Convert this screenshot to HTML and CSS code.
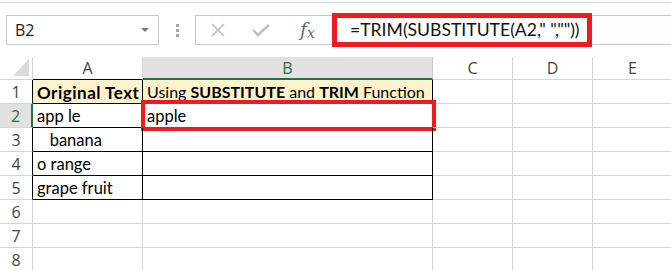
FILE: index.html
```html
<!DOCTYPE html>
<html lang="en">
<head>
  <meta charset="UTF-8">
  <title>TRIM SUBSTITUTE</title>
  <link rel="stylesheet" href="styles.css">
</head>
<body>
  <div class="topline"></div>

  <!-- formula bar -->
  <div class="toolbar">
    <div class="namebox">
      <span>B2</span>
      <svg class="caret" width="8" height="5" viewBox="0 0 8 5"><path d="M0 0H8L4 4Z" fill="#7a7a7a"/></svg>
    </div>
    <div class="dots"><i></i><i></i><i></i></div>
    <div class="fbtns">
      <svg width="16" height="16" viewBox="0 0 16 16"><path d="M2 2L14 14M14 2L2 14" stroke="#bdbdbd" stroke-width="1.6"/></svg>
      <svg width="18" height="14" viewBox="0 0 18 14"><path d="M1 7L6 12L17 2" stroke="#bdbdbd" stroke-width="2.4" fill="none"/></svg>
      <span class="fx">f<sub>x</sub></span>
    </div>
    <div class="fbar">
      <div class="formula">=TRIM(SUBSTITUTE(A2," ",""))</div>
    </div>
  </div>

  <!-- sheet -->
  <div class="sheet">
    <div class="hd corner"><svg width="16" height="17" viewBox="0 0 16 17"><path d="M16 0V17H0Z" fill="#dadada"/></svg></div>
    <div class="hd colA">A</div>
    <div class="hd colB sel">B</div>
    <div class="hd">C</div>
    <div class="hd">D</div>
    <div class="hd">E</div>

    <div class="rh edge">1</div>
    <div class="c b head bold">Original Text</div>
    <div class="c b head">Using <b>SUBSTITUTE</b> and <b>TRIM</b> Function</div>
    <div class="c"></div><div class="c"></div><div class="c"></div>

    <div class="rh edge rsel">2</div>
    <div class="c b">app le</div>
    <div class="c b">apple<span class="mark"></span></div>
    <div class="c"></div><div class="c"></div><div class="c"></div>

    <div class="rh edge">3</div>
    <div class="c b">&nbsp;&nbsp;&nbsp;banana</div>
    <div class="c b"></div>
    <div class="c"></div><div class="c"></div><div class="c"></div>

    <div class="rh edge">4</div>
    <div class="c b">o range</div>
    <div class="c b"></div>
    <div class="c"></div><div class="c"></div><div class="c"></div>

    <div class="rh edge">5</div>
    <div class="c b">grape fruit</div>
    <div class="c b"></div>
    <div class="c"></div><div class="c"></div><div class="c"></div>

    <div class="rh">6</div>
    <div class="c"></div><div class="c"></div><div class="c"></div><div class="c"></div><div class="c"></div>

    <div class="rh">7</div>
    <div class="c"></div><div class="c"></div><div class="c"></div><div class="c"></div><div class="c"></div>

    <div class="rh">8</div>
    <div class="c"></div><div class="c"></div><div class="c"></div><div class="c"></div><div class="c"></div>
  </div>
</body>
</html>
```

FILE: styles.css
```css
* {
  box-sizing: border-box;
}

body {
  margin: 0;
  background: #fff;
  font-family: "Open Sans", "Noto Sans", sans-serif;
  overflow: hidden;
  width: 671px;
  height: 270px;
}

.topline {
  margin-top: 2px;
  border-top: 1px solid #d4d4d4;
}

/* formula bar */
.toolbar {
  display: flex;
  align-items: center;
  margin-top: 12px;
  height: 30px;
}

.namebox {
  display: flex;
  align-items: center;
  justify-content: space-between;
  margin-left: 6px;
  width: 153px;
  height: 30px;
  padding: 0 9px 0 8px;
  border: 1px solid #c6c6c6;
  font-size: 16px;
  color: #222;
}

.dots {
  display: flex;
  flex-direction: column;
  gap: 2px;
  margin-left: 17px;
  width: 3px;
}

.dots i {
  display: block;
  width: 3px;
  height: 3px;
  background: #a6a6a6;
}

.fbtns {
  display: flex;
  align-items: center;
  margin-left: 16px;
  width: 137px;
  height: 30px;
  padding-left: 14px;
  gap: 26px;
  border: 1px solid #c6c6c6;
  border-right: none;
}

.fx {
  font-family: "DejaVu Serif", "Liberation Serif", serif;
  font-style: italic;
  font-size: 19px;
  color: #666;
  line-height: 1;
  margin-left: 4px;
}

.fx sub {
  font-size: 14px;
  vertical-align: -2px;
}

.fbar {
  flex: 1;
  display: flex;
  align-items: center;
  height: 30px;
  border-top: 1px solid #c6c6c6;
  border-bottom: 1px solid #c6c6c6;
  background: #fdfdfd;
}

.formula {
  width: 260px;
  height: 34px;
  margin: -3px 0 -2px 0;
  padding: 3px 0 0 13px;
  border: 5px solid #ed1c24;
  font-family: "Lato", "Liberation Sans", sans-serif;
  font-size: 17.6px;
  line-height: 18px;
  color: #111;
  white-space: pre;
  background: #fff;
}

/* sheet */
.sheet {
  display: grid;
  grid-template-columns: 33px 110px 290px 80px 80px 80px;
  grid-template-rows: 23px repeat(8, 24px);
  margin-top: 12px;
}

.hd, .rh {
  display: flex;
  align-items: center;
  justify-content: center;
  font-size: 16px;
  line-height: 1;
  color: #444;
  border-right: 1px solid #d4d4d4;
  border-bottom: 1px solid #d4d4d4;
  background: #fff;
}

.hd.corner {
  justify-content: flex-end;
  align-items: flex-end;
  padding: 0 3px 3px 0;
}

.hd.colA {
  border-bottom-color: #000;
}

.hd.sel {
  background: #e1e1e1;
  color: #217346;
  border-bottom: 2px solid #217346;
  border-right-color: #c6c6c6;
}

.rh {
  padding-top: 1px;
}

.rh.edge {
  border-right-color: #000;
}

.rh.rsel {
  background: #e1e1e1;
  color: #217346;
  border-right: 2px solid #217346;
}

.c {
  position: relative;
  display: flex;
  align-items: center;
  padding: 1px 0 0 4px;
  font-family: "Lato", "Liberation Sans", sans-serif;
  font-size: 16.5px;
  line-height: 1;
  color: #000;
  white-space: pre;
  border-right: 1px solid #d4d4d4;
  border-bottom: 1px solid #d4d4d4;
}

.c.b {
  border-right-color: #000;
  border-bottom-color: #000;
}

.c.head {
  background: #fff2cc;
  font-size: 16px;
}

.c.bold {
  font-size: 17px;
  letter-spacing: 0.5px;
}

.c.bold,
.c.head b {
  font-weight: bold;
}

.mark {
  position: absolute;
  top: -4px;
  left: -2px;
  right: -4px;
  bottom: -4px;
  border: 4px solid #ed1c24;
}
```
